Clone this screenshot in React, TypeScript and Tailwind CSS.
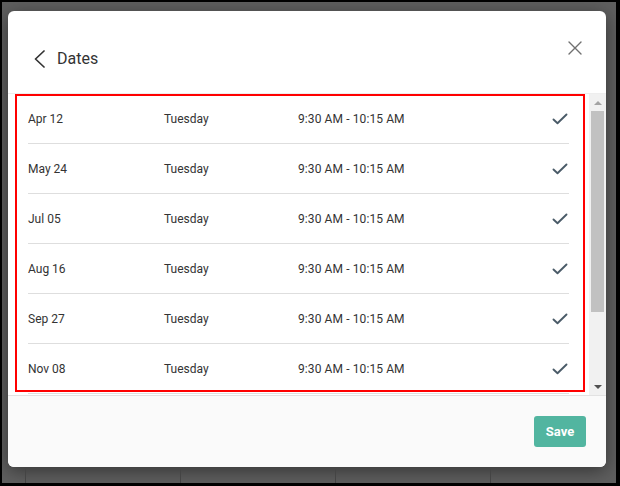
import React from 'react';

const DATES = [
  { date: 'Apr 12', day: 'Tuesday', time: '9:30 AM - 10:15 AM' },
  { date: 'May 24', day: 'Tuesday', time: '9:30 AM - 10:15 AM' },
  { date: 'Jul 05', day: 'Tuesday', time: '9:30 AM - 10:15 AM' },
  { date: 'Aug 16', day: 'Tuesday', time: '9:30 AM - 10:15 AM' },
  { date: 'Sep 27', day: 'Tuesday', time: '9:30 AM - 10:15 AM' },
  { date: 'Nov 08', day: 'Tuesday', time: '9:30 AM - 10:15 AM' },
];

function CheckIcon() {
  return (
    <svg width="16" height="12" viewBox="0 0 16 12" fill="none">
      <path d="M1.5 6.5 L5.5 10.2 L14.5 1.5" stroke="#4a5b68" strokeWidth="1.9" strokeLinecap="round" strokeLinejoin="round" />
    </svg>
  );
}

function DateRow({ date, day, time }: { date: string; day: string; time: string }) {
  return (
    <div className="flex h-[50px] items-center border-b border-[#dedede] text-[12px] text-[#333]">
      <span className="w-[136px]">{date}</span>
      <span className="w-[134px]">{day}</span>
      <span className="flex-1 tracking-[0.1px]">{time}</span>
      <span className="mr-[1px] flex items-center">
        <CheckIcon />
      </span>
    </div>
  );
}

export default function App() {
  return (
    <div className="h-[486px] w-[620px] border-b-[3px] border-l-[2px] border-r-[4px] border-t-[2px] border-black font-['Roboto',sans-serif]">
      <div className="flex h-full flex-col bg-[#5f5f5f] pl-[6px] pt-[9px]">
        <div className="flex h-[456px] w-[598px] flex-col overflow-hidden rounded-[6px] bg-white shadow-[0_4px_18px_rgba(0,0,0,0.45)]">
          {/* header */}
          <div className="flex h-[83px] shrink-0 items-start justify-between border-b border-[#eeeeee] pl-[25px] pr-[24px]">
            <div className="mt-[37px] flex h-[22px] items-center gap-[11px]">
              <svg width="13" height="18" viewBox="0 0 13 18" fill="none">
                <path d="M11 1 L2.5 9 L11 17" stroke="#333" strokeWidth="1.7" strokeLinecap="round" strokeLinejoin="round" />
              </svg>
              <span className="text-[16px] text-[#333]">Dates</span>
            </div>
            <svg className="mt-[30px]" width="14" height="14" viewBox="0 0 14 14" fill="none">
              <path d="M1 1 L13 13 M13 1 L1 13" stroke="#707070" strokeWidth="1.4" strokeLinecap="round" />
            </svg>
          </div>

          {/* list */}
          <div className="relative flex h-[301px] shrink-0">
            <div className="flex-1 overflow-hidden px-5">
              {DATES.map(d => (
                <DateRow key={d.date} {...d} />
              ))}
            </div>
            <div className="flex w-[17px] flex-col items-center bg-[#f1f1f1]">
              <div className="flex h-[17px] items-center justify-center">
                <div className="h-0 w-0 border-x-[4px] border-b-[4px] border-x-transparent border-b-[#a3a3a3]" />
              </div>
              <div className="h-[201px] w-[13px] bg-[#c1c1c1]" />
              <div className="flex-1" />
              <div className="flex h-[17px] items-center justify-center">
                <div className="h-0 w-0 border-x-[4px] border-t-[4px] border-x-transparent border-t-[#505050]" />
              </div>
            </div>
            <div className="pointer-events-none absolute left-[7px] top-0 h-[298px] w-[570px] border-2 border-[#ff0000]" />
          </div>

          {/* footer */}
          <div className="flex flex-1 items-start justify-end border-t border-[#e2e2e2] bg-[#fafafa] pr-5 pt-5">
            <button type="button" className="h-[31px] w-[52px] rounded-[3px] bg-[#52b5a0] text-[13px] font-bold text-white">
              Save
            </button>
          </div>
        </div>
        <div className="flex flex-1 pt-[2px]">
          <div className="w-[18px] border-r border-[#444]" />
          <div className="w-[155px] border-r border-[#444]" />
          <div className="w-[155px] border-r border-[#444]" />
          <div className="w-[155px] border-r border-[#444]" />
        </div>
      </div>
    </div>
  );
}
